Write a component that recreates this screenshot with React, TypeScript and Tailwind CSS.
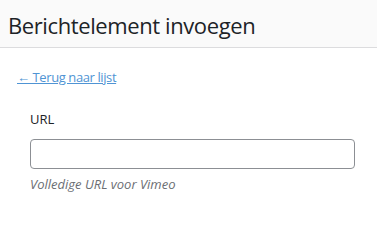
import React from "react";

export default function App() {
  return (
    <div className="w-[377px] h-[216px] bg-white" style={{ fontFamily: '"Open Sans", "Noto Sans", sans-serif' }}>
      <div className="h-[48px] bg-[#fafafa] border-b border-[#dcdcde] flex items-center pl-[8px] pt-[2px]">
        <h1 className="text-[22px] leading-none font-medium text-[#1d2327] tracking-[-0.4px]">Berichtelement invoegen</h1>
      </div>
      <div className="pl-[17px] pt-[16px]">
        <a href="#" className="text-[13px] leading-[18px] text-[#4f94d4] underline tracking-[-0.4px]">← Terug naar lijst</a>
      </div>
      <div className="pl-[30px] pr-[22px] pt-[22px]">
        <div className="text-[13px] leading-[18px] text-[#1d2327]">URL</div>
        <input type="text" className="mt-[11px] block w-[325px] h-[30px] rounded-[4px] border border-[#8c8f94] bg-white" />
        <div className="mt-[7px] text-[13px] leading-[16px] italic text-[#6b6e73]">Volledige URL voor Vimeo</div>
      </div>
    </div>
  );
}
